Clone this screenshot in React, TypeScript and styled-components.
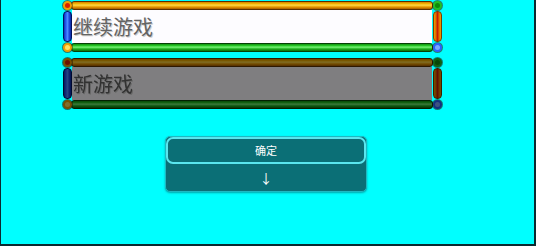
import styled, { createGlobalStyle } from "styled-components";

const GlobalStyle = createGlobalStyle`
  html, body {
    margin: 0;
    padding: 0;
    background: #00ffff;
  }
`;

const Screen = styled.div`
  box-sizing: border-box;
  width: 536px;
  height: 246px;
  background: #00ffff;
  border-left: 1px solid #0c2a30;
  border-right: 2px solid #0c2a30;
  border-bottom: 2px solid #0c2a30;
  display: flex;
  flex-direction: column;
  overflow: hidden;
`;

const MenuList = styled.div`
  display: flex;
  flex-direction: column;
  gap: 5px;
  width: 380px;
  margin: 0 0 0 61px;
`;

const Frame = styled.div<{ $dim?: boolean }>`
  display: grid;
  grid-template-columns: 10px 1fr 10px;
  grid-template-rows: 10px 1fr 9px;
  height: 52px;
  filter: ${(p) => (p.$dim ? "brightness(0.5)" : "none")};
`;

const HBar = styled.div<{ $tone: "gold" | "green" }>`
  align-self: center;
  height: 9px;
  margin: 0 -1px;
  box-sizing: border-box;
  border: 1px solid ${(p) => (p.$tone === "gold" ? "#5a3000" : "#064006")};
  border-radius: 3px;
  background: ${(p) =>
    p.$tone === "gold"
      ? "linear-gradient(to bottom, #d08000 0%, #f4b400 25%, #ffd848 45%, #e89a00 70%, #a85a00 100%)"
      : "linear-gradient(to bottom, #0e900e 0%, #28c828 25%, #78f478 45%, #20b020 70%, #0a6a0a 100%)"};
`;

const VBar = styled.div<{ $tone: "blue" | "red" }>`
  justify-self: center;
  width: 9px;
  margin: 1px 0;
  box-sizing: border-box;
  border: 1px solid ${(p) => (p.$tone === "blue" ? "#001060" : "#7a3c00")};
  border-radius: 4px;
  background: ${(p) =>
    p.$tone === "blue"
      ? "linear-gradient(to right, #0c30b8 0%, #2a62f8 30%, #4a88ff 50%, #1c48e0 75%, #0a2a9a 100%)"
      : "linear-gradient(to right, #f0a000 0%, #e07000 25%, #c81c00 50%, #e07000 75%, #f0a000 100%)"};
`;

const Knob = styled.div<{ $ring: string; $core: string }>`
  place-self: center;
  width: 9px;
  height: 9px;
  box-sizing: border-box;
  border-radius: 50%;
  border: 2px solid ${(p) => p.$ring};
  background: ${(p) => p.$core};
  box-shadow: 0 0 0 1px rgba(60, 30, 0, 0.55);
  position: relative;
  z-index: 1;
`;

const Face = styled.div`
  background: #fdfcff;
  display: flex;
  align-items: center;
  padding-left: 1px;
  font-family: "Noto Sans CJK SC", "DejaVu Sans", sans-serif;
  font-size: 20px;
  color: #636363;
  text-shadow: 1px 1px 0 #cfcfcf;
`;

const ButtonPanel = styled.div`
  box-sizing: border-box;
  width: 202px;
  height: 56px;
  margin: 27px 0 0 164px;
  background: #0b6f76;
  border: 1px solid #1fb8c2;
  border-radius: 5px;
  display: flex;
  flex-direction: column;
  font-family: "Noto Sans CJK SC", "DejaVu Sans", sans-serif;
  color: #ffffff;
  box-shadow: 0 1px 2px rgba(0, 80, 90, 0.5);
`;

const PanelButton = styled.div<{ $active?: boolean }>`
  box-sizing: border-box;
  height: ${(p) => (p.$active ? "27px" : "auto")};
  flex: ${(p) => (p.$active ? "none" : "1")};
  display: flex;
  align-items: center;
  justify-content: center;
  border: ${(p) => (p.$active ? "2px solid #5ae6ee" : "none")};
  border-radius: 7px;
  padding-bottom: ${(p) => (p.$active ? "1px" : "0")};
  font-size: ${(p) => (p.$active ? "11px" : "13px")};
`;

const MenuItem = ({ label, dim }: { label: string; dim?: boolean }) => (
  <Frame $dim={dim}>
    <Knob $ring="#f0a000" $core="#d82000" />
    <HBar $tone="gold" />
    <Knob $ring="#22c022" $core="#0c8a0c" />
    <VBar $tone="blue" />
    <Face>{label}</Face>
    <VBar $tone="red" />
    <Knob $ring="#f0a000" $core="#ffe060" />
    <HBar $tone="green" />
    <Knob $ring="#2a60ff" $core="#7aa8ff" />
  </Frame>
);

const App = () => {
  return (
    <>
      <GlobalStyle />
      <Screen>
        <MenuList>
          <MenuItem label="继续游戏" />
          <MenuItem label="新游戏" dim />
        </MenuList>
        <ButtonPanel>
          <PanelButton $active>确定</PanelButton>
          <PanelButton>↓</PanelButton>
        </ButtonPanel>
      </Screen>
    </>
  );
};

export default App;
